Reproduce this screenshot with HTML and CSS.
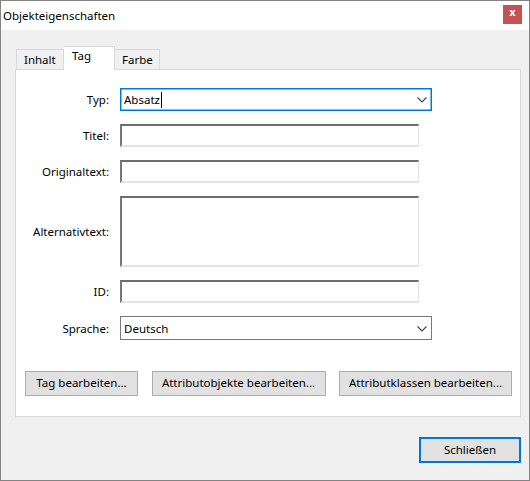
FILE: index.html
```html
<!DOCTYPE html>
<html lang="de">
<head>
<meta charset="utf-8">
<title>Objekteigenschaften</title>
<link rel="stylesheet" href="styles.css">
</head>
<body>
<div class="window">
  <div class="titlebar">
    <span class="title">Objekteigenschaften</span>
    <span class="close">x</span>
  </div>
  <div class="content">
    <div class="tabs">
      <div class="tab t1">Inhalt</div>
      <div class="tab active">Tag</div>
      <div class="tab t3">Farbe</div>
    </div>
    <div class="panel">
      <div class="form">
        <label class="lbl">Typ:</label>
        <div class="select focus"><span class="val">Absatz<span class="caret"></span></span>
          <svg class="chev" width="10" height="6" viewBox="0 0 10 6"><path d="M0.5 0.5 L5 5 L9.5 0.5" fill="none" stroke="#444" stroke-width="1.1"/></svg>
        </div>
        <label class="lbl">Titel:</label>
        <div class="input"></div>
        <label class="lbl">Originaltext:</label>
        <div class="input"></div>
        <label class="lbl">Alternativtext:</label>
        <div class="input tall"></div>
        <label class="lbl">ID:</label>
        <div class="input"></div>
        <label class="lbl">Sprache:</label>
        <div class="select sprache"><span class="val">Deutsch</span>
          <svg class="chev" width="10" height="6" viewBox="0 0 10 6"><path d="M0.5 0.5 L5 5 L9.5 0.5" fill="none" stroke="#444" stroke-width="1.1"/></svg>
        </div>
      </div>
      <div class="buttons">
        <div class="btn b1">Tag bearbeiten...</div>
        <div class="btn b2">Attributobjekte bearbeiten...</div>
        <div class="btn b3">Attributklassen bearbeiten...</div>
      </div>
    </div>
    <div class="footer">
      <div class="btn default">Schließen</div>
    </div>
  </div>
</div>
</body>
</html>
```
FILE: styles.css
```css
html, body {
  margin: 0;
  padding: 0;
}
body {
  width: 530px;
  height: 481px;
  font-family: "Noto Sans", "Open Sans", sans-serif;
  font-size: 11.5px;
  color: #000;
  background: #f0f0f0;
}
.window {
  box-sizing: border-box;
  width: 530px;
  height: 481px;
  border: 1px solid #838383;
  background: #f0f0f0;
  display: flex;
  flex-direction: column;
}
.titlebar {
  height: 29px;
  background: #fff;
  display: flex;
  align-items: center;
  justify-content: space-between;
  padding: 0 7px 0 2px;
  flex-shrink: 0;
}
.title {
  font-size: 11.5px;
  color: #000;
  margin-top: -1px;
}
.close {
  width: 19px;
  height: 19px;
  margin-top: -3px;
  background: #c75050;
  color: #fff;
  font-weight: bold;
  font-size: 10px;
  line-height: 16px;
  text-align: center;
  font-family: "DejaVu Sans", sans-serif;
}
.content {
  padding: 16px 8px 0 14px;
  display: flex;
  flex-direction: column;
}
.tabs {
  display: flex;
  align-items: flex-end;
  height: 23px;
  padding-left: 1px;
  position: relative;
  z-index: 1;
}
.tab {
  box-sizing: border-box;
  height: 20px;
  border: 1px solid #d9d9d9;
  border-bottom: none;
  background: #f0f0f0;
  padding: 0 0 0 7px;
  line-height: 19px;
}
.t1 { width: 48px; }
.t3 { width: 45px; border-left: none; }
.tab.active {
  width: 51px;
  height: 24px;
  margin-bottom: -1px;
  background: #fff;
  border: 1px solid #d9d9d9;
  border-bottom: none;
  border-left: none;
  line-height: 18px;
  padding-left: 8px;
}
.panel {
  box-sizing: border-box;
  width: 506px;
  height: 348px;
  background: #fff;
  border: 1px solid #d9d9d9;
  padding: 18px 8px 0 9px;
}
.form {
  display: grid;
  grid-template-columns: 84px 312px;
  column-gap: 11px;
  row-gap: 13px;
  align-items: center;
}
.lbl {
  text-align: right;
}
.select {
  box-sizing: border-box;
  height: 23px;
  border: 1px solid #7a7a7a;
  display: flex;
  align-items: center;
  justify-content: space-between;
  padding: 0 3px 0 3px;
  background: #fff;
}
.select.sprache { height: 24px; }
.select.focus {
  border: 1px solid #0078d7;
  box-shadow: inset 0 0 0 0.5px #0078d7;
}
.chev { margin-right: 1px; margin-top: 1px; }
.val { display: flex; align-items: center; }
.caret {
  display: inline-block;
  width: 1px;
  height: 16px;
  background: #000;
  margin-left: 1px;
}
.input {
  box-sizing: border-box;
  width: 299px;
  height: 23px;
  border-top: 2px solid #6d6d6d;
  border-left: 2px solid #777;
  border-right: 1px solid #e3e3e3;
  border-bottom: 2px solid #e3e3e3;
}
.input.tall { height: 71px; }
.buttons {
  display: flex;
  justify-content: space-between;
  margin-top: 31px;
}
.btn {
  box-sizing: border-box;
  height: 25px;
  background: #e1e1e1;
  border: 1px solid #adadad;
  text-align: center;
  line-height: 22px;
}
.b1 { width: 113px; }
.b2 { width: 174px; }
.b3 { width: 173px; }
.footer {
  display: flex;
  justify-content: flex-end;
  margin-top: 20px;
}
.btn.default {
  width: 102px;
  height: 26px;
  border: 2px solid #0078d7;
  line-height: 21px;
}
```
